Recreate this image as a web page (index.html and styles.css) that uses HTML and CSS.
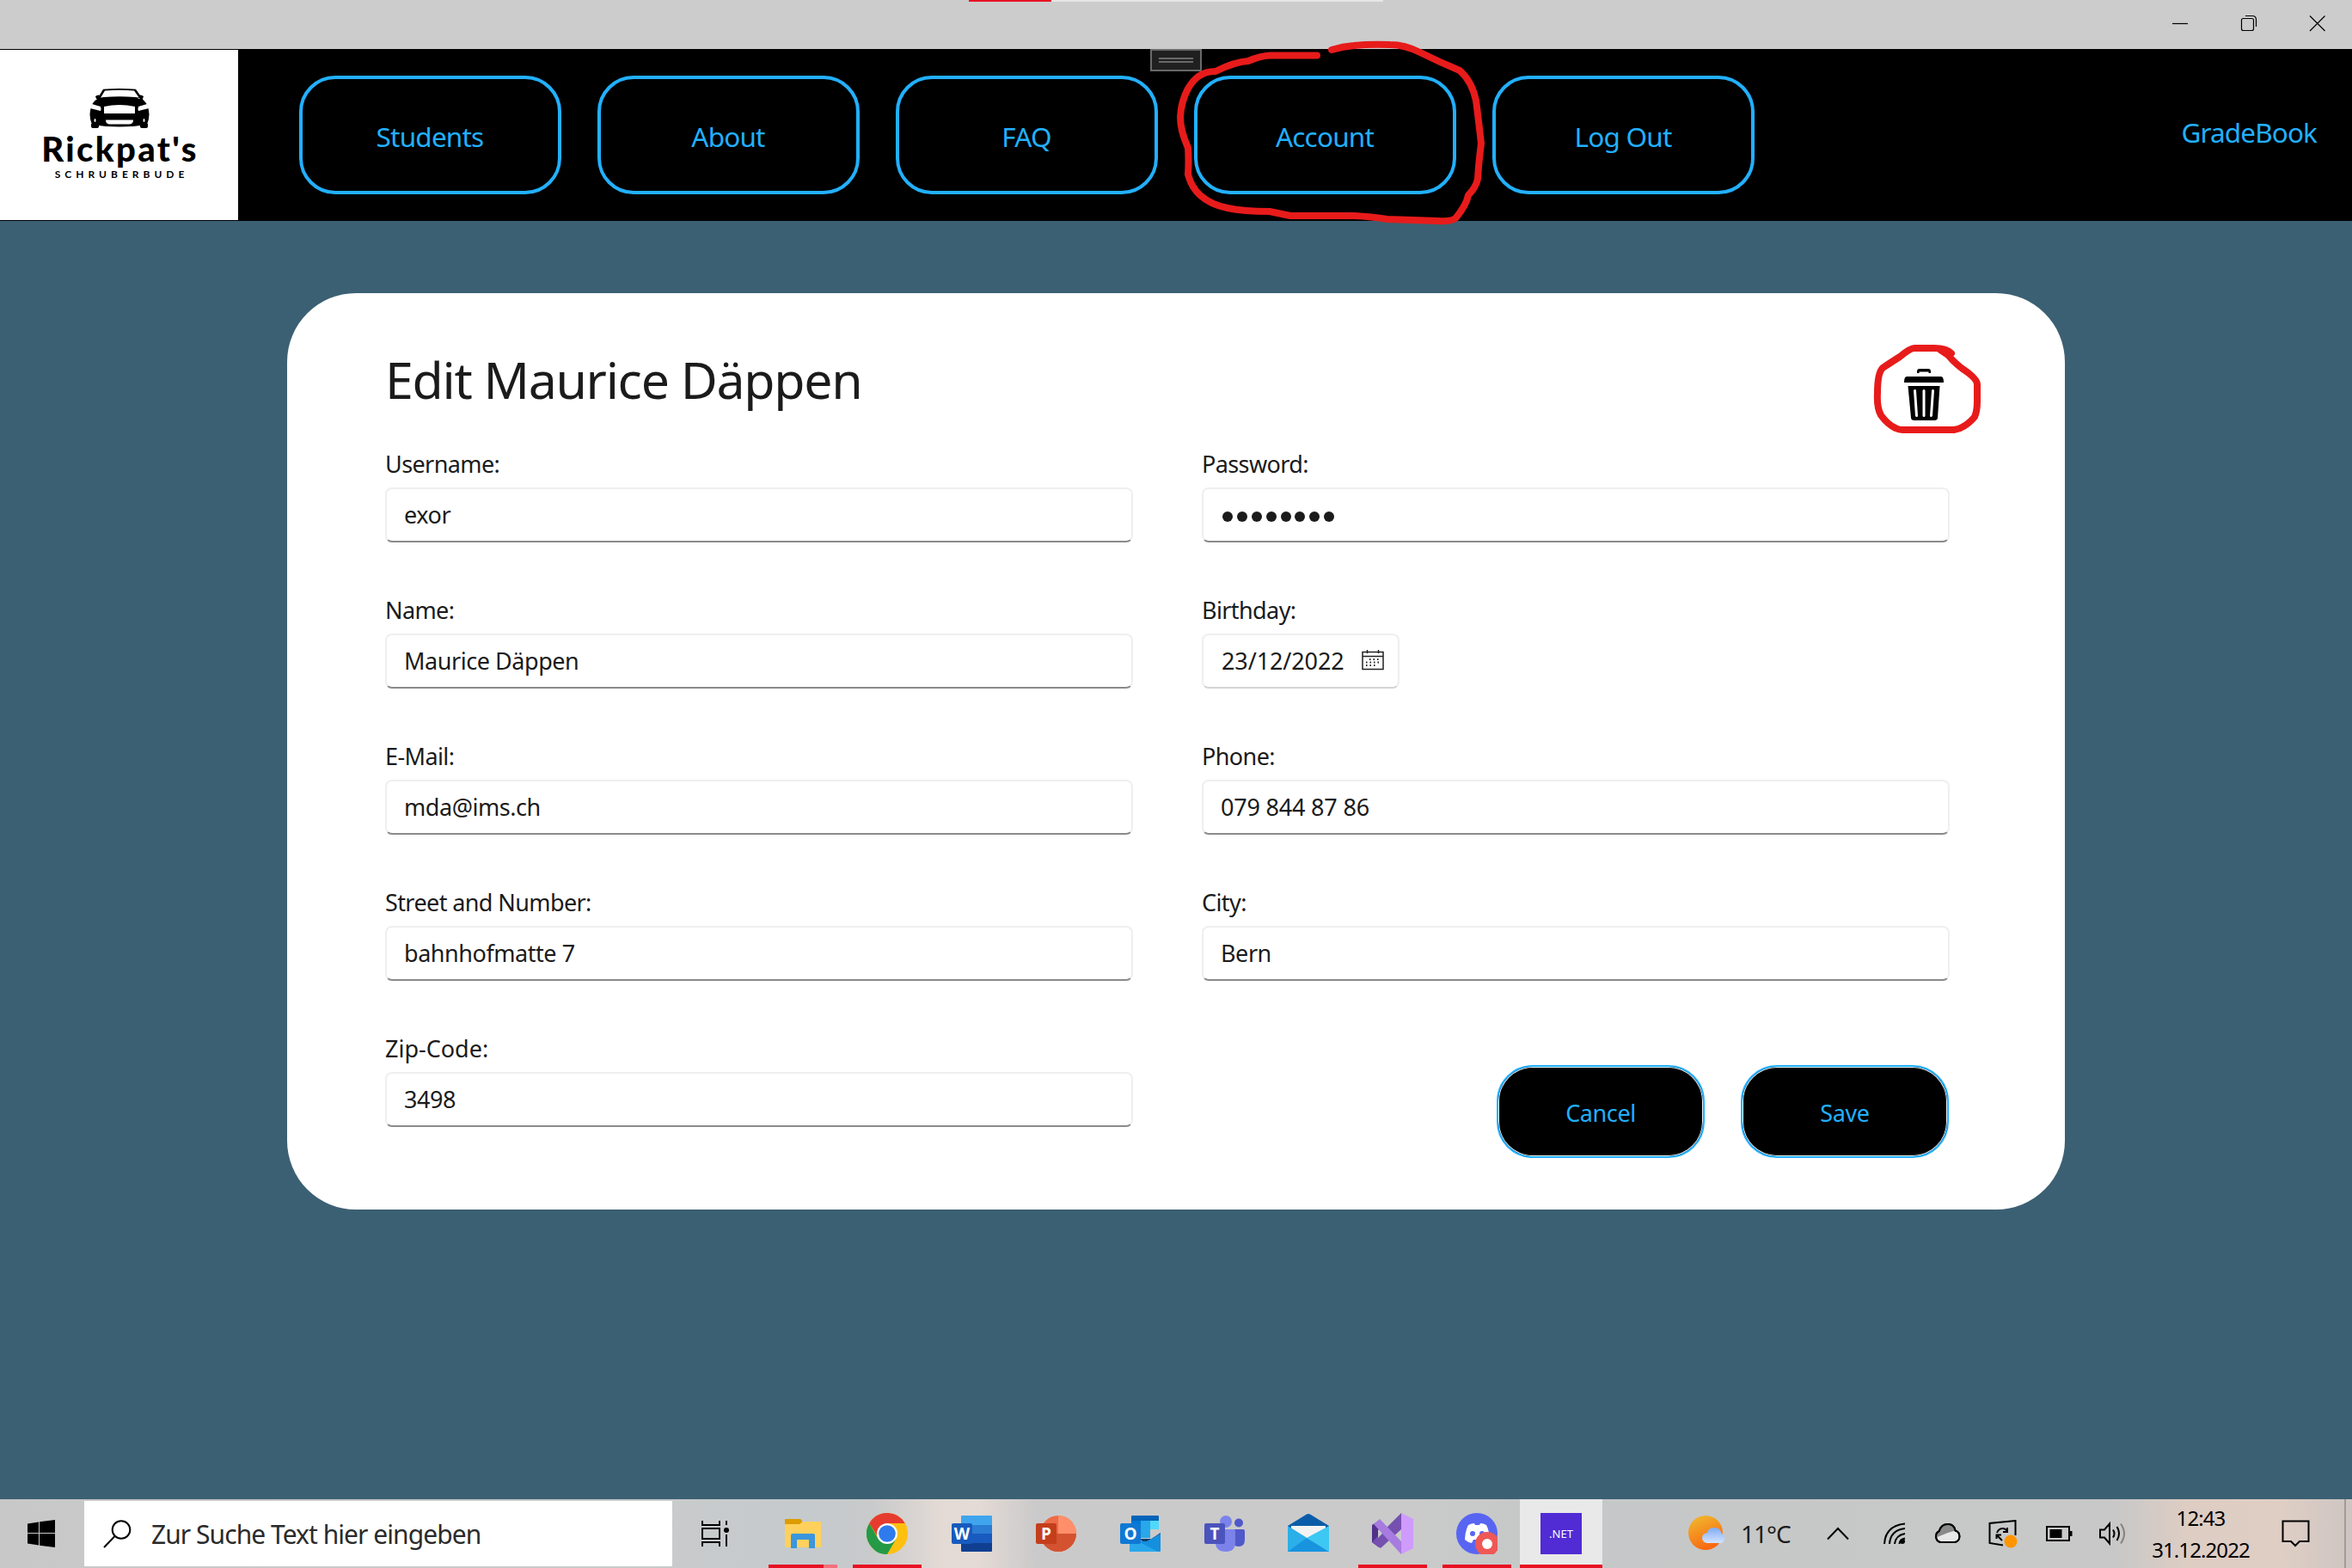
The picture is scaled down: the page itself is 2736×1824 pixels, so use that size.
FILE: index.html
```html
<!DOCTYPE html>
<html lang="de">
<head>
<meta charset="utf-8">
<title>GradeBook</title>
<link rel="stylesheet" href="styles.css">
</head>
<body>
<div class="screen">
  <header class="titlebar">
    <div class="loading"><span class="loading-done"></span></div>
    <svg class="caption" viewBox="0 0 80 57"><path d="M31 27.5h18"/></svg>
    <svg class="caption" viewBox="0 0 80 57"><rect x="31.5" y="21.5" width="14" height="14" rx="2"/><path d="M36 18.500h8q4.500 0 4.500 4.500v8"/></svg>
    <svg class="caption" viewBox="0 0 80 57"><path d="M31 18.500l17.500 17.500M48.500 18.500l-17.500 17.500"/></svg>
  </header>

  <nav class="nav">
    <div class="logo">
      <svg class="car" viewBox="0 0 70 46">
        <path d="M16 0.800q19-1.600 38 0l9 13h-3L52 2.500q-17-1.400-34 0L11 14H8z"/>
        <path d="M7 9q4-3 6 0v3H8zM63 9q-4-3-6 0v3h5zM4 17Q9 10 17 10q18-1.500 36 0 8 0 13 7 3 5 3.500 13 0 6-2.500 12-32 5-64 0Q.5 36 .5 30 1 22 4 17z"/>
        <path d="M2 41h9v3q0 2-3 2H5q-3 0-3-2zM59 41h9v3q0 2-3 2h-3q-3 0-3-2z"/>
        <path class="cut" d="M17 21q18-4 36 0v8H17zM19 36.500h32q0 5-5 5H24q-5 0-5-5zM3 18l10 3q1 3 0 5L1 23zM67 18l-10 3q-1 3 0 5l12-3z"/>
        <ellipse class="cut" cx="6.500" cy="37" rx="1" ry="2"/><ellipse class="cut" cx="63.500" cy="37" rx="1" ry="2"/>
      </svg>
      <div class="brand">Rickpat's</div>
      <div class="tagline">SCHRUBERBUDE</div>
    </div>
    <div class="menu">
      <a class="item">Students</a><a class="item">About</a><a class="item">FAQ</a><a class="item">Account</a><a class="item">Log Out</a>
    </div>
    <div class="appname">GradeBook</div>
  </nav>

  <main class="main">
    <section class="card">
      <div class="head">
        <h1>Edit Maurice Däppen</h1>
        <svg class="trash" viewBox="0 0 46 60"><path d="M15 5V3q0-3 3-3h10q3 0 3 3v2h-2.500V3.500h-11V5zM3 9h40q3 0 3 7H0q0-7 3-7zM4.500 20h37L39 57q0 3-4 3H12q-4 0-4-3z"/><path class="slit" d="M12.500 25.500l2 29M23 25.500v29M33.500 25.500l-2 29"/></svg>
      </div>
      <div class="form">
        <div class="field"><label>Username:</label><div class="input">exor</div></div>
        <div class="field"><label>Password:</label><div class="input"><div class="dots"><i></i><i></i><i></i><i></i><i></i><i></i><i></i><i></i></div></div></div>
        <div class="field"><label>Name:</label><div class="input">Maurice Däppen</div></div>
        <div class="field"><label>Birthday:</label><div class="input date"><span>23/12/2022</span>
          <svg class="cal" viewBox="0 0 26 24"><path d="M1 2.500h24v20H1zM1 7.500h24M6.500 0v4M19.500 0v4"/><path class="days" d="M9 11h12M5 14.500h16M5 18h12"/></svg></div></div>
        <div class="field"><label>E-Mail:</label><div class="input">mda@ims.ch</div></div>
        <div class="field"><label>Phone:</label><div class="input digits">079 844 87 86</div></div>
        <div class="field"><label>Street and Number:</label><div class="input">bahnhofmatte 7</div></div>
        <div class="field"><label>City:</label><div class="input">Bern</div></div>
        <div class="field"><label class="wide">Zip-Code:</label><div class="input">3498</div></div>
        <div class="actions"><button class="btn">Cancel</button><button class="btn">Save</button></div>
      </div>
    </section>
  </main>

  <footer class="taskbar">
    <div class="start"><svg width="32" height="32" viewBox="0 0 32 32"><path d="M0 4.500L13 2.500v12.500H0zM14 2.300L32 0v15H14zM0 16h13v13.500L0 27.500zM14 16h18v16l-18-2.300z"/></svg></div>
    <div class="search"><svg width="33" height="33" viewBox="0 0 33 33"><circle cx="21" cy="11.500" r="10.300"/><path d="M13.500 19L1 32"/></svg><span>Zur Suche Text hier eingeben</span></div>
    <div class="view"><svg width="32" height="30" viewBox="0 0 32 30"><path d="M1 0v5h20V0M1 9h20v12H1zM1 30v-5h20v5M29 0v5M29 16v14"/><circle cx="29" cy="11" r="3"/></svg></div>

    <div class="apps">
      <div class="app"><svg viewBox="0 0 48 48"><path fill="#dd9c00" d="M3 8q0-1 1-1h16q3 0 3 3t-3 4H3z"/><path fill="#ffd15c" d="M3 13h17l4-3h20q1 0 1 1v28q0 1-1 1H4q-1 0-1-1z"/><path fill="#3a96dd" d="M10 41V26q0-2 2-2h24q2 0 2 2v15h-7V31H17v10z"/></svg><div class="running"><b></b><b class="more"></b></div></div>
      <div class="app"><svg viewBox="0 0 48 48"><circle cx="24" cy="24" r="24" fill="#fdc010"/><path fill="#e63c30" d="M3.200 12A24 24 0 0 1 44.800 12H24L14 29z"/><path fill="#259a46" d="M3.200 12A24 24 0 0 0 24 48l10.500-18H13.600z"/><circle cx="24" cy="24" r="12" fill="#fff"/><circle cx="24" cy="24" r="9.800" fill="#2f7bee"/></svg><div class="running"><b></b></div></div>
      <div class="app"><svg viewBox="0 0 48 48"><path fill="#41a5ee" d="M12 4q0-1 1-1h34q1 0 1 1v10H12z"/><path fill="#2b7cd3" d="M12 14h36v10H12z"/><path fill="#185abd" d="M12 24h36v11H12z"/><path fill="#103f91" d="M12 35h36v9q0 1-1 1H13q-1 0-1-1z"/><rect x="1" y="12" width="24" height="24" rx="2" fill="#185abd"/><text x="13" y="31">W</text></svg></div>
      <div class="app"><svg viewBox="0 0 48 48"><circle cx="27" cy="24" r="21" fill="#ed6c47"/><path fill="#ff8f6b" d="M27 3a21 21 0 0 1 21 21H27z"/><path fill="#d35230" d="M6 24h42a21 21 0 0 1-42 0z"/><rect x="1" y="12" width="24" height="24" rx="2" fill="#c43e1c"/><text x="13" y="31">P</text></svg></div>
      <div class="app"><svg viewBox="0 0 48 48"><path fill="#0364b8" d="M14 4q0-1 1-1h30q1 0 1 1v6H14z"/><path fill="#0078d4" d="M14 9h11v22H14z"/><path fill="#28a8ea" d="M25 9h11v20H25z"/><path fill="#50d9ff" d="M36 9h10v10H36z"/><path fill="#0a3f73" d="M12 23l18 12 18-12v7H12z"/><path fill="#1490df" d="M48 24v20q0 1-1 1H13l-1-1 3-11h17z"/><path fill="#28a8ea" d="M12 28l33 17H13q-1 0-1-1z"/><rect x="1" y="12" width="24" height="24" rx="2" fill="#0f78d4"/><text x="13" y="31">O</text></svg></div>
      <div class="app"><svg viewBox="0 0 48 48"><circle cx="41" cy="11.500" r="5" fill="#5059c9"/><path fill="#5059c9" d="M36 19h10q2 0 2 2v10q0 8-7 8-5 0-6-3z"/><circle cx="26" cy="10" r="7" fill="#7b83eb"/><path fill="#7b83eb" d="M14 19h21q2 0 2 2v13q0 11-11 11T14 36z"/><rect x="1" y="12" width="24" height="24" rx="2" fill="#4b53bc"/><text x="13" y="31">T</text></svg></div>
      <div class="app"><svg viewBox="0 0 48 48"><path fill="#0a5ca8" d="M0 15L22 1.500q2-1.200 4 0L48 15v4H0z"/><path fill="#f3f3f3" d="M4 15h40v12L24 33 4 27z"/><path fill="#2bafe8" d="M0 15l48 30H0z"/><path fill="#3cc8f2" d="M48 15v30L22 29z"/><path fill="#138bdc" d="M22 29l26 16H0z" opacity=".75"/></svg></div>
      <div class="app"><svg viewBox="0 0 48 48"><path fill="#52308a" d="M0 14l8-5v31l-8-6z"/><path fill="#7550b0" d="M0 34L34 0v19L10 41z"/><path fill="#a77be0" d="M2 13l7-6 25 26v15z"/><path fill="#cf9bfc" d="M34 0l14 7v34l-14 7z"/><path fill="#c8c9ca" d="M7 19l5 5-5 5z"/></svg><div class="running"><b></b></div></div>
      <div class="app"><svg viewBox="0 0 48 48"><rect width="48" height="48" rx="24" fill="#5865f2"/><path fill="#fff" d="M14 14q4-2 7-2l1 2h5l1-2q4 0 7 2 4 8 4 17-3 3-8 4l-2-4h-9l-2 4q-5-1-8-4 0-9 4-17z"/><circle cx="19" cy="24" r="3" fill="#5865f2"/><circle cx="30" cy="24" r="3" fill="#5865f2"/><circle cx="36" cy="36" r="14" fill="#ee5856"/><circle cx="36" cy="36" r="6" fill="#fff"/></svg><div class="running"><b></b></div></div>
      <div class="app active"><div class="dotnet">.NET</div><div class="running"><b></b></div></div>
    </div>

    <div class="tray">
      <svg class="weather" width="46" height="42" viewBox="0 0 46 42"><defs><linearGradient id="sun" x2=".4" y2="1"><stop stop-color="#f0bd30"/><stop offset="1" stop-color="#f96a12"/></linearGradient><linearGradient id="cl" x2="0" y2="1"><stop stop-color="#7fabf3"/><stop offset="1" stop-color="#d5e4ff"/></linearGradient></defs><circle cx="20" cy="20" r="20" fill="url(#sun)"/><path fill="url(#cl)" d="M22 32a6 6 0 0 1 0-12q1-6 8-6t9 7a6 6 0 0 1-1 11z"/></svg>
      <span class="temp">11°C</span>
      <svg class="chev" width="26" height="16" viewBox="0 0 26 16"><path d="M1 14.500L13 2l12 12.500"/></svg>
      <svg class="wifi" width="27" height="26" viewBox="0 0 27 26"><path d="M1 25Q2 4 25 1.500M7 25Q8 9 25 7M13 25q1-10 12-12M18.500 25q0-5 6.500-6.500"/><circle class="solid" cx="22" cy="22" r="3"/></svg>
      <svg class="cloud" width="33" height="24" viewBox="0 0 33 24"><path fill="#e8e8e8" d="M8 22a7 7 0 0 1-1-13Q9 1 17 1q7 0 8.500 7.500A7 7 0 0 1 25 22z"/><path class="shade" d="M2 17Q1 9 7 9 9 1 17 1q7 0 8.500 7.500L17 11z"/><path d="M8 22a7 7 0 0 1-1-13Q9 1 17 1q7 0 8.500 7.500A7 7 0 0 1 25 22z"/></svg>
      <svg class="sync" width="34" height="33" viewBox="0 0 34 33"><path d="M17 29.500L1.500 27V4L31.500 1v17"/><path d="M10 15q2-5 7-5 3 0 5 3M22 9v5h-5M16 24l-6-6M9.500 22v-4.500H15"/><circle cx="26" cy="25" r="7.500" fill="#ff9500" stroke="none"/></svg>
      <svg class="batt" width="31" height="20" viewBox="0 0 31 20"><path d="M1 2h26v16H1z"/><path class="solid" d="M4.500 5h14v10h-14zM28 7h2.500v6H28z"/></svg>
      <svg class="vol" width="34" height="28" viewBox="0 0 34 28"><path d="M1 9.500h5l6-7v23l-6-7H1z"/><path d="M16 9.500q3 4.500 0 9M20.500 6q5 8 0 16"/><path opacity=".35" d="M25 2.500q8 11.500 0 23"/></svg>
      <div class="clock"><span>12:43</span><span>31.12.2022</span></div>
      <svg class="note" width="33" height="32" viewBox="0 0 33 32"><path d="M1.500 1.500h30v23.500H21l-5 5-5-5H1.500z"/></svg>
      <div class="peek"></div>
    </div>
  </footer>

  <div class="handle"><span></span><span></span></div>
  <svg class="ink" viewBox="0 0 2736 1824">
    <path d="M1532 64.500H1477Q1466 65 1452 71 1436 72 1414 83 1402 83 1394 89 1388 93 1382 103 1374 118 1373 136 1373 152 1382 172 1383 186 1382 203 1386 218 1396 227 1408 238 1428 242 1446 246 1477 246L1501 251H1575Q1596 252 1614 255 1640 256 1673 257 1690 258 1694 253 1706 238 1708 227 1717 218 1719 208 1720 190 1723 167 1720 140 1717 117 1712 94 1698 82 1674 72 1652 61 1634 52 1617 52 1594 51 1575 53 1562 54 1549 58"/>
    <path d="M2270 411Q2264 405 2250 405H2227Q2222 405 2210 415 2202 420 2190 428 2184 434 2184 457 2183 474 2188 483 2196 494 2205 498 2209 500 2213 500H2273Q2286 498 2297 485 2300 478 2300 467V447Q2300 442 2290 434 2276 425 2266 413L2257 407"/>
  </svg>
</div>
</body>
</html>
```
FILE: styles.css
```css
* { box-sizing: border-box; }
body { margin: 0; font-family: "Noto Sans", "Open Sans", sans-serif; color: #1b1b1b; }
svg { display: block; flex: none; }
.screen { position: relative; width: 2736px; height: 1824px; display: flex; flex-direction: column; overflow: hidden; background: #3c6073; }

.titlebar { height: 57px; flex: none; background: #ccc; display: flex; justify-content: flex-end; position: relative; }
.loading { position: absolute; left: 1127px; top: 0; width: 482px; height: 2px; background: #e6e6e6; }
.loading-done { display: block; width: 96px; height: 2px; background: #e81123; }
.caption { width: 80px; height: 57px; fill: none; stroke: #000; stroke-width: 1.2; }

.nav { height: 200px; flex: none; background: #000; display: flex; align-items: center; color: #22b0ff; }
.logo { width: 277px; height: 198px; background: #fff; color: #000; display: flex; flex-direction: column; align-items: center; padding-top: 45px; }
.car { width: 70px; height: 46px; }
.car .cut { fill: #fff; }
.brand { font-family: Lato, sans-serif; font-weight: 900; font-size: 40px; line-height: 48px; letter-spacing: 2.400px; padding-left: 2px; height: 48px; }
.tagline { font-family: Lato, sans-serif; font-weight: 700; font-size: 12px; line-height: 14px; letter-spacing: 5px; padding-left: 6px; margin-top: -1px; }
.menu { display: flex; gap: 42px; margin-left: 71px; }
.item { width: 305px; height: 138px; border: 4px solid #22b0ff; border-radius: 42px; display: flex; align-items: center; justify-content: center; font-size: 31.500px; letter-spacing: -.8px; padding: 2px 1px 0 0; }
.appname { margin-left: auto; padding-right: 41px; font-size: 31.500px; letter-spacing: -.9px; padding-bottom: 7px; }

.main { flex: 1; padding: 84px 334px 0; }
.card { height: 1066px; background: #fff; border-radius: 80px; padding: 62px 134px 0 114px; }
.head { display: flex; justify-content: space-between; height: 120px; }
h1 { margin: -2px 0 0; font-weight: 400; font-size: 59px; line-height: 80px; letter-spacing: -1.300px; }
.trash { width: 46px; height: 60px; margin: 26px 7px 0 0; }
.slit { stroke: #fff; stroke-width: 3; stroke-linecap: round; }
.form { display: grid; grid-template-columns: 870px 870px; column-gap: 80px; grid-auto-rows: 170px; }
.field { display: flex; flex-direction: column; }
label { height: 44px; line-height: 34px; font-size: 27px; letter-spacing: -.6px; }
.wide { letter-spacing: 0; }
.input { height: 64px; border: 2px solid #efefef; border-bottom-color: #8a8a8a; border-radius: 8px; padding: 0 20px 2px; display: flex; align-items: center; font-size: 27px; letter-spacing: -.45px; }
.digits { letter-spacing: -.2px; }
.date { width: 230px; border-bottom-color: #d4d4d4; gap: 20px; letter-spacing: -.1px; padding-left: 21px; }
.dots { display: flex; gap: 4.900px; padding-left: 2px; padding-top: 6px; }
.dots i { width: 12px; height: 12px; border-radius: 50%; background: #1b1b1b; }
.cal { width: 26px; height: 24px; fill: none; stroke: #222; stroke-width: 1.500; }
.days { stroke-dasharray: 1.500 3; stroke-width: 2; }
.actions { display: flex; justify-content: flex-end; gap: 42px; padding: 36px 1px 0 0; }
.btn { width: 242px; height: 108px; border: 2px solid #22b0ff; border-radius: 42px; background: #000; box-shadow: inset 0 0 0 1px #e8f6ff; color: #22b0ff; font: 27px "Noto Sans", sans-serif; letter-spacing: -.4px; padding: 3px 0 0; }

.taskbar { height: 80px; flex: none; display: flex; background: linear-gradient(90deg, #c8c8c8 0, #c9cbcb 28%, #c5cacd 34%, #c8cacb 37%, #e3dad5 40%, #e5dbd6 41.500%, #cbcaca 44%, #cacaca 60%, #c5c8c8 66%, #c8c8c8 90%, #decdc3 93%, #dfcec4 97%, #cdc5c2 100%); }
.start { width: 98px; display: flex; align-items: center; padding-left: 32px; }
.search { width: 684px; height: 76px; margin-top: 2px; background: #fff; display: flex; align-items: center; padding-left: 22px; gap: 23px; font-size: 30px; letter-spacing: -.95px; color: #2b2b2b; }
.search svg { fill: none; stroke: #000; stroke-width: 2; }
.view { width: 112px; display: flex; align-items: center; padding-left: 34px; }
.view path { fill: none; stroke: #000; stroke-width: 2; }
.apps { display: flex; gap: 18px; }
.app { width: 80px; display: flex; flex-direction: column; align-items: center; justify-content: space-between; padding-top: 16px; }
.app svg { width: 48px; height: 48px; }
.app text { font: 700 19px "Open Sans", sans-serif; fill: #fff; text-anchor: middle; }
.app:not(:has(.running)) { justify-content: flex-start; }
.running { display: flex; width: 100%; height: 4px; }
.running b { flex: 1; background: #e81123; }
.running .more { flex: 0 0 16px; background: #f4707b; }
.active { width: 96px; background: #e9e9e9; margin-left: -8px; }
.dotnet { width: 48px; height: 48px; background: #512bd4; color: #fff; font-size: 13px; line-height: 48px; text-align: center; }
.tray { flex: 1; display: flex; align-items: center; margin-left: 100px; }
.tray svg { fill: none; }
.tray svg:not(.weather) { stroke: #000; stroke-width: 2; }
.tray .solid { fill: #000; stroke: none; }
.tray .shade { fill: #8a8a8a; stroke: none; }
.temp { font-size: 28px; width: 115px; padding-left: 15px; letter-spacing: -1px; }
.wifi { margin-left: 40px; }
.cloud { margin-left: 31px; }
.sync { margin-left: 31px; }
.batt { margin-left: 33px; }
.vol { margin-left: 31px; }
.clock { width: 132px; margin-left: 18px; margin-right: 1px; display: flex; flex-direction: column; align-items: center; font-size: 24px; line-height: 37px; letter-spacing: -.9px; color: #000; }
.note { margin-left: 27px; }
.peek { width: 2px; height: 80px; background: #a09b98; margin-left: auto; margin-right: 7px; }

.handle { position: absolute; left: 1338px; top: 57px; width: 60px; height: 26px; background: #202020; border: 2px solid #696969; padding: 8px 8px; display: flex; flex-direction: column; gap: 2px; }
.handle span { height: 2px; background: #696969; }
.ink { position: absolute; left: 0; top: 0; width: 2736px; height: 1824px; fill: none; stroke: #e81b1b; stroke-width: 8; stroke-linecap: round; stroke-linejoin: round; }
```
